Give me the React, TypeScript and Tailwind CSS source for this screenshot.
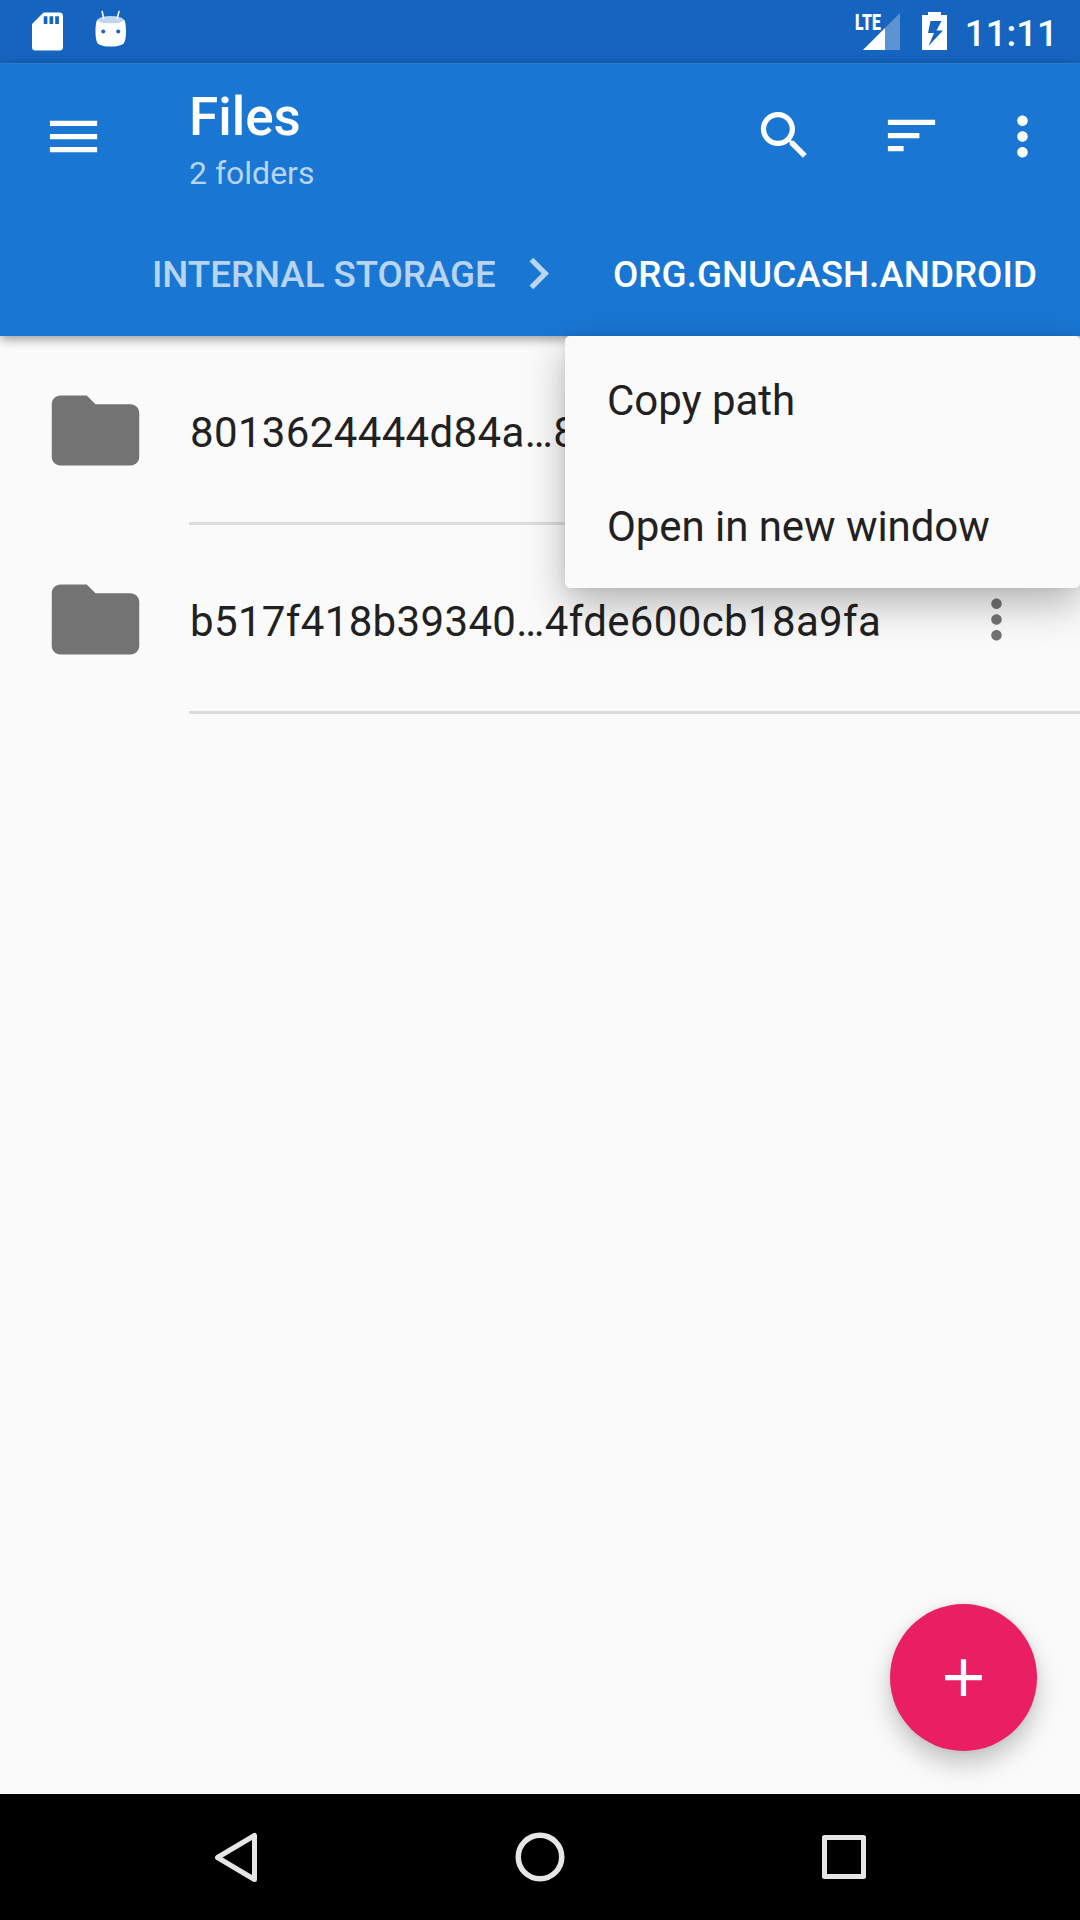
import type { ReactNode } from "react";

function Icon({ d, className = "" }: { d: string; className?: string }) {
  return (
    <svg viewBox="0 0 24 24" fill="currentColor" className={"shrink-0 " + className}>
      <path d={d} />
    </svg>
  );
}

const MENU = "M3 18h18v-2H3v2zm0-5h18v-2H3v2zm0-7v2h18V6H3z";
const SEARCH =
  "M15.5 14h-.79l-.28-.27C15.41 12.59 16 11.11 16 9.5 16 5.91 13.09 3 9.5 3S3 5.91 3 9.5 5.91 16 9.5 16c1.61 0 3.09-.59 4.23-1.57l.27.28v.79l5 4.99L20.49 19l-4.99-5zm-6 0C7.01 14 5 11.99 5 9.5S7.01 5 9.5 5 14 7.01 14 9.5 11.99 14 9.5 14z";
const SORT = "M3 18h6v-2H3v2zM3 6v2h18V6H3zm0 7h12v-2H3v2z";
const MORE =
  "M12 8c1.1 0 2-.9 2-2s-.9-2-2-2-2 .9-2 2 .9 2 2 2zm0 2c-1.1 0-2 .9-2 2s.9 2 2 2 2-.9 2-2-.9-2-2-2zm0 6c-1.1 0-2 .9-2 2s.9 2 2 2 2-.9 2-2-.9-2-2-2z";
const CHEVRON = "M10 6L8.59 7.41 13.17 12l-4.58 4.59L10 18l6-6z";
const FOLDER =
  "M10 4H4c-1.1 0-1.99.9-1.99 2L2 18c0 1.1.9 2 2 2h16c1.1 0 2-.9 2-2V8c0-1.1-.9-2-2-2h-8l-2-2z";
const ADD = "M19 13h-6v6h-2v-6H5v-2h6V5h2v6h6v2z";

function StatusBar() {
  return (
    <div className="flex h-[63px] items-start bg-[#1565c0] text-white">
      <svg width="31" height="39" viewBox="0 0 31 39" className="mt-[12px] ml-8">
        <path
          fillRule="evenodd"
          fill="currentColor"
          d="M11.5.5H27.500a3.500 3.500 0 0 1 3.500 3.500V35a3.500 3.500 0 0 1-3.500 3.500h-24A3.500 3.500 0 0 1 0 35V12zM11.700 4.300V12h3.700V4.300zM17.500 4.300V12h3.700V4.300zM23.200 4.300V12h3.700V4.300z"
        />
      </svg>
      <svg width="32" height="37" viewBox="0 0 32 37" className="mt-[10px] ml-[32px]">
        <path
          fill="currentColor"
          d="M2.500 9.500C1 11 .5 17 .5 22s.8 9.500 2.200 11.500C5 35.500 10 36.600 15.700 36.600S26.500 35.500 28.700 33.500C30.200 31.500 31 27 31 22s-.5-11-2-12.500C27 12 22 13 15.700 13S4.500 12 2.500 9.500z"
        />
        <ellipse cx="15.700" cy="9.700" rx="12.800" ry="3.600" fill="#c1d5ee" />
        <path d="M7.200 1.500l1.400 7M24 1.500l-1.800 7" stroke="currentColor" strokeWidth="1.500" strokeLinecap="round" />
        <circle cx="8.200" cy="21.500" r="2" fill="#1565c0" />
        <circle cx="23.200" cy="21.500" r="2" fill="#1565c0" />
      </svg>
      <div className="relative ml-auto h-[63px] w-[46px]">
        <svg width="37" height="37" viewBox="0 0 37 37" className="absolute top-[12.500px] right-px">
          <path d="M0 37L37 0V37z" fill="#5c93d2" />
          <path d="M0 37L22 15V37z" fill="currentColor" />
        </svg>
        <span className="absolute top-[11px] left-0 origin-left scale-x-[.7] text-[22.500px] leading-[22px] font-black">LTE</span>
      </div>
      <svg width="25" height="38" viewBox="0 0 25 38" className="mt-[12px] ml-[21px]">
        <path
          fillRule="evenodd"
          fill="currentColor"
          d="M6 0h13v3h6v35H0V3h6zM8.500 9L6 21h6L6.500 34 21 18.500h-6.500L19.500 9z"
        />
      </svg>
      <span className="mt-[12px] mr-[22px] ml-[18px] text-[36.75px] leading-[44px] font-medium">11:11</span>
    </div>
  );
}

function FileRow({ name }: { name: string }) {
  return (
    <div className="flex h-[189px] items-center pl-[43px]">
      <Icon d={FOLDER} className="size-[105px] text-[#737373]" />
      <div className="ml-[41px] flex h-full flex-1 items-center border-b-[3px] border-[#dcdcdc] pt-[3px]">
        <span className="flex-1 pt-1 pl-px text-[42px] leading-[50px] tracking-[0.35px] whitespace-nowrap text-[#212121]">
          {name}
        </span>
        <Icon d={MORE} className="mr-[52px] size-[63px] text-[#737373]" />
      </div>
    </div>
  );
}

function MenuItem({ children }: { children: ReactNode }) {
  return (
    <div className="flex h-[126px] items-center px-[42px] pt-[3px] text-[42px] leading-[50px] text-[#212121]">{children}</div>
  );
}

export default function App() {
  return (
    <div className="relative flex h-[1920px] w-[1080px] flex-col overflow-hidden bg-[#fafafa] font-['Roboto',sans-serif]">
      <StatusBar />
      <header className="relative h-[273px] bg-[#1976d2] text-white shadow-[0_3px_10px_rgba(0,0,0,0.4)]">
        <div className="flex h-[147px] items-center border-t border-[#2a7ad0] pb-[2px] pl-[42px]">
          <Icon d={MENU} className="size-[63px]" />
          <div className="ml-[84px] flex-1 pt-[5px]">
            <div className="text-[53px] leading-[62px] font-medium">Files</div>
            <div className="mt-[6px] text-[32px] leading-[38px] text-white/70">2 folders</div>
          </div>
          <Icon d={SEARCH} className="-mt-px size-[63px]" />
          <Icon d={SORT} className="-mt-px ml-16 size-[63px]" />
          <Icon d={MORE} className="mr-[26px] ml-[48px] size-[63px]" />
        </div>
        <div className="flex h-[126px] items-center pl-[152px] text-[36.75px] leading-[44px] font-medium">
          <span className="w-[355px] pt-[3px] tracking-[-0.05px] whitespace-nowrap text-white/70">INTERNAL STORAGE</span>
          <Icon d={CHEVRON} className="size-[63px] text-white/70" />
          <span className="ml-[43px] pt-[3px] tracking-[0.05px] whitespace-nowrap">ORG.GNUCASH.ANDROID</span>
        </div>
      </header>
      <main className="flex-1">
        <FileRow name="8013624444d84a…8" />
        <FileRow name="b517f418b39340…4fde600cb18a9fa" />
      </main>
      <div className="absolute top-[336px] right-0 w-[515px] rounded-[5px] bg-[#fafafa] shadow-[0_16px_40px_rgba(0,0,0,0.28),0_0_8px_rgba(0,0,0,0.08)]">
        <MenuItem>Copy path</MenuItem>
        <MenuItem>
          <span className="tracking-[-0.06px]">Open in new window</span>
        </MenuItem>
      </div>
      <button className="absolute right-[43px] bottom-[169px] flex size-[147px] items-center justify-center rounded-full bg-[#e91e63] text-white shadow-[0_13px_24px_rgba(0,0,0,0.22),0_0_6px_rgba(0,0,0,0.08)]">
        <Icon d={ADD} className="size-[63px]" />
      </button>
      <nav className="flex h-[126px] items-center justify-between bg-black px-[204px] text-[#e6e6e6]">
        <svg width="64" height="64" viewBox="0 0 64 64" fill="none" stroke="currentColor" strokeWidth="5" strokeLinejoin="round">
          <path d="M50.500 10.500V54.500L13.500 32.500z" />
        </svg>
        <svg width="64" height="64" viewBox="0 0 64 64" fill="none" stroke="currentColor" strokeWidth="5.500">
          <circle cx="32" cy="32" r="21.750" />
        </svg>
        <svg width="64" height="64" viewBox="0 0 64 64" fill="none" stroke="currentColor" strokeWidth="5" strokeLinejoin="round">
          <rect x="12.500" y="12.500" width="39" height="39" />
        </svg>
      </nav>
    </div>
  );
}
